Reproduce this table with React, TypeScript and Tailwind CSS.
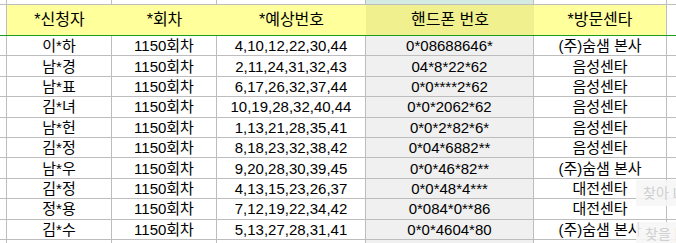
import React from "react";

const rows = [
  ["이*하", "1150회차", "4,10,12,22,30,44", "0*08688646*", "(주)숨샘 본사"],
  ["남*경", "1150회차", "2,11,24,31,32,43", "04*8*22*62", "음성센타"],
  ["남*표", "1150회차", "6,17,26,32,37,44", "0*0****2*62", "음성센타"],
  ["김*녀", "1150회차", "10,19,28,32,40,44", "0*0*2062*62", "음성센타"],
  ["남*헌", "1150회차", "1,13,21,28,35,41", "0*0*2*82*6*", "음성센타"],
  ["김*정", "1150회차", "8,18,23,32,38,42", "0*04*6882**", "음성센타"],
  ["남*우", "1150회차", "9,20,28,30,39,45", "0*0*46*82**", "(주)숨샘 본사"],
  ["김*정", "1150회차", "4,13,15,23,26,37", "0*0*48*4***", "대전센타"],
  ["정*용", "1150회차", "7,12,19,22,34,42", "0*084*0**86", "대전센타"],
  ["김*수", "1150회차", "5,13,27,28,31,41", "0*0*4604*80", "(주)숨샘 본사"],
];

const widths = ["w-[105px]", "w-[105px]", "w-[149px]", "w-[168px]", "w-[133px]"];

function Row({ cells, h, top }: { cells: string[]; h: string; top?: boolean }) {
  return (
    <div className={`flex ${h} border-b border-[#bdbdbd]`}>
      <div className="w-[7px] shrink-0 border-r border-[#bdbdbd]" />
      {cells.map((c, i) => (
        <div
          key={i}
          className={`${widths[i]} shrink-0 flex items-center justify-center border-r border-[#bdbdbd] ${
            i === 3 ? (top ? "bg-[#d5ebe1]" : "bg-[#f0f0f0]") : "bg-white"
          }`}
        >
          {c}
        </div>
      ))}
      <div className="flex-1" />
    </div>
  );
}

export default function App() {
  return (
    <div
      className="relative w-[676px] h-[243px] overflow-hidden bg-white text-black text-[15px] leading-none"
      style={{ fontFamily: '"Liberation Sans", "Noto Sans CJK KR", sans-serif' }}
    >
      {/* column letter strip (cropped) */}
      <Row cells={["", "", "", "", ""]} h="h-[5px]" top />

      {/* header */}
      <div className="flex h-[31px] border-b border-[#1e9a1e] text-[16px]">
        <div className="w-[7px] shrink-0 border-r border-[#bdbdbd]" />
        <div className="w-[105px] shrink-0 bg-[#ffff9c] flex items-center justify-center">*신청자</div>
        <div className="w-[105px] shrink-0 bg-[#ffff9c] flex items-center justify-center">*회차</div>
        <div className="w-[149px] shrink-0 bg-[#ffff9c] flex items-center justify-center">*예상번호</div>
        <div className="w-[168px] shrink-0 bg-[#f0f08e] flex items-center justify-center">핸드폰 번호</div>
        <div className="w-[133px] shrink-0 bg-[#ffff9c] flex items-center justify-center border-r border-[#bdbdbd]">*방문센타</div>
        <div className="flex-1" />
      </div>

      {rows.map((r, i) => (
        <Row key={i} cells={r} h="h-[20.4px]" />
      ))}
      <Row cells={["", "", "", "", ""]} h="h-[20px]" />

      {/* faded find-box overlays */}
      <div className="absolute left-[636px] top-[180px] w-[46px] h-[26px] bg-[#f6f6f6]/90 flex items-center pl-[7px] text-[14px] text-[#cfcfcf] whitespace-nowrap">
        찾아 L
      </div>
      <div className="absolute left-[636px] top-[222px] w-[46px] h-[24px] bg-[#f6f6f6]/90 flex items-center pl-[9px] text-[14px] text-[#cfcfcf] whitespace-nowrap">
        찾을 |
      </div>
    </div>
  );
}
